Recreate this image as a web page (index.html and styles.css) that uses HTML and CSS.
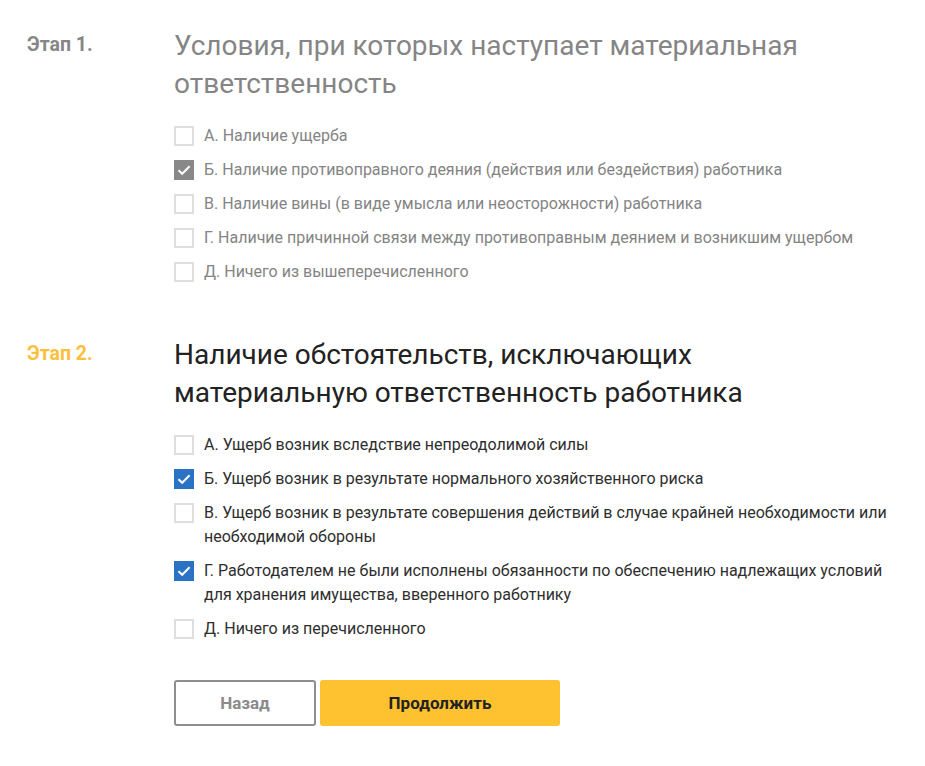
FILE: index.html
```html
<!DOCTYPE html>
<html lang="ru">
<head>
<meta charset="utf-8">
<title>Этапы</title>
<link rel="stylesheet" href="styles.css">
</head>
<body>
<div class="page">
  <section class="stage stage-done">
    <div class="stage-label">Этап 1.</div>
    <div class="stage-body">
      <h2 class="stage-title">Условия, при которых наступает материальная ответственность</h2>
      <ul class="options">
        <li class="option"><span class="box"></span><span class="text">А. Наличие ущерба</span></li>
        <li class="option"><span class="box checked"><svg viewBox="0 0 20 20"><path d="M4.5 10.2 L8.2 13.8 L15.6 6.2"/></svg></span><span class="text">Б. Наличие противоправного деяния (действия или бездействия) работника</span></li>
        <li class="option"><span class="box"></span><span class="text">В. Наличие вины (в виде умысла или неосторожности) работника</span></li>
        <li class="option"><span class="box"></span><span class="text">Г. Наличие причинной связи между противоправным деянием и возникшим ущербом</span></li>
        <li class="option"><span class="box"></span><span class="text">Д. Ничего из вышеперечисленного</span></li>
      </ul>
    </div>
  </section>
  <section class="stage stage-active">
    <div class="stage-label">Этап 2.</div>
    <div class="stage-body">
      <h2 class="stage-title">Наличие обстоятельств, исключающих материальную ответственность работника</h2>
      <ul class="options">
        <li class="option"><span class="box"></span><span class="text">А. Ущерб возник вследствие непреодолимой силы</span></li>
        <li class="option"><span class="box checked"><svg viewBox="0 0 20 20"><path d="M4.5 10.2 L8.2 13.8 L15.6 6.2"/></svg></span><span class="text">Б. Ущерб возник в результате нормального хозяйственного риска</span></li>
        <li class="option"><span class="box"></span><span class="text">В. Ущерб возник в результате совершения действий в случае крайней необходимости или необходимой обороны</span></li>
        <li class="option"><span class="box checked"><svg viewBox="0 0 20 20"><path d="M4.5 10.2 L8.2 13.8 L15.6 6.2"/></svg></span><span class="text">Г. Работодателем не были исполнены обязанности по обеспечению надлежащих условий для хранения имущества, вверенного работнику</span></li>
        <li class="option"><span class="box"></span><span class="text">Д. Ничего из перечисленного</span></li>
      </ul>
      <div class="actions">
        <button class="btn btn-back" type="button">Назад</button>
        <button class="btn btn-next" type="button">Продолжить</button>
      </div>
    </div>
  </section>
</div>
</body>
</html>
```

FILE: styles.css
```css
* { box-sizing: border-box; }
html, body { margin: 0; padding: 0; background: #fff; }
body {
  font-family: Roboto, "Liberation Sans", Arial, sans-serif;
  color: #333;
}
.page {
  padding: 27px 0 0 27px;
  display: flex;
  flex-direction: column;
  gap: 52px;
}
.stage {
  display: grid;
  grid-template-columns: 147px 1fr;
}
.stage-label {
  font-size: 19.5px;
  font-weight: 700;
  line-height: 35px;
}
.stage-done .stage-label { color: #868686; }
.stage-active .stage-label { color: #fdbf3a; }
.stage-title {
  margin: 0;
  font-size: 28px;
  font-weight: 400;
  line-height: 38px;
  max-width: 640px;
}
.stage-done .stage-title { color: #858585; }
.stage-active .stage-title { color: #222; }
.options {
  list-style: none;
  margin: 21px 0 0;
  padding: 0;
  display: flex;
  flex-direction: column;
  gap: 10px;
  max-width: 730px;
}
.option {
  display: flex;
  align-items: flex-start;
  gap: 10px;
  font-size: 16px;
  line-height: 24px;
}
.stage-done .option { color: #848484; }
.stage-active .option { color: #2e2e2e; }
.box {
  flex: none;
  width: 20px;
  height: 20px;
  margin-top: 2px;
  border: 2px solid #dedede;
  display: flex;
}
.box svg { width: 20px; height: 20px; margin: -2px; }
.box svg path { fill: none; stroke: #fff; stroke-width: 2; }
.stage-done .box.checked { background: #888; border-color: #888; }
.stage-active .box.checked { background: #2a72c4; border-color: #2a72c4; }
.actions {
  margin-top: 39px;
  display: flex;
  gap: 4px;
}
.btn {
  height: 46px;
  border-radius: 3px;
  font-family: Roboto, "Liberation Sans", Arial, sans-serif;
  font-size: 17px;
  font-weight: 700;
  cursor: pointer;
}
.btn-back {
  width: 142px;
  background: #fff;
  border: 2px solid #8e8e8e;
  color: #8a8a8a;
}
.btn-next {
  width: 240px;
  background: #fec12f;
  border: none;
  color: #222;
}
```
